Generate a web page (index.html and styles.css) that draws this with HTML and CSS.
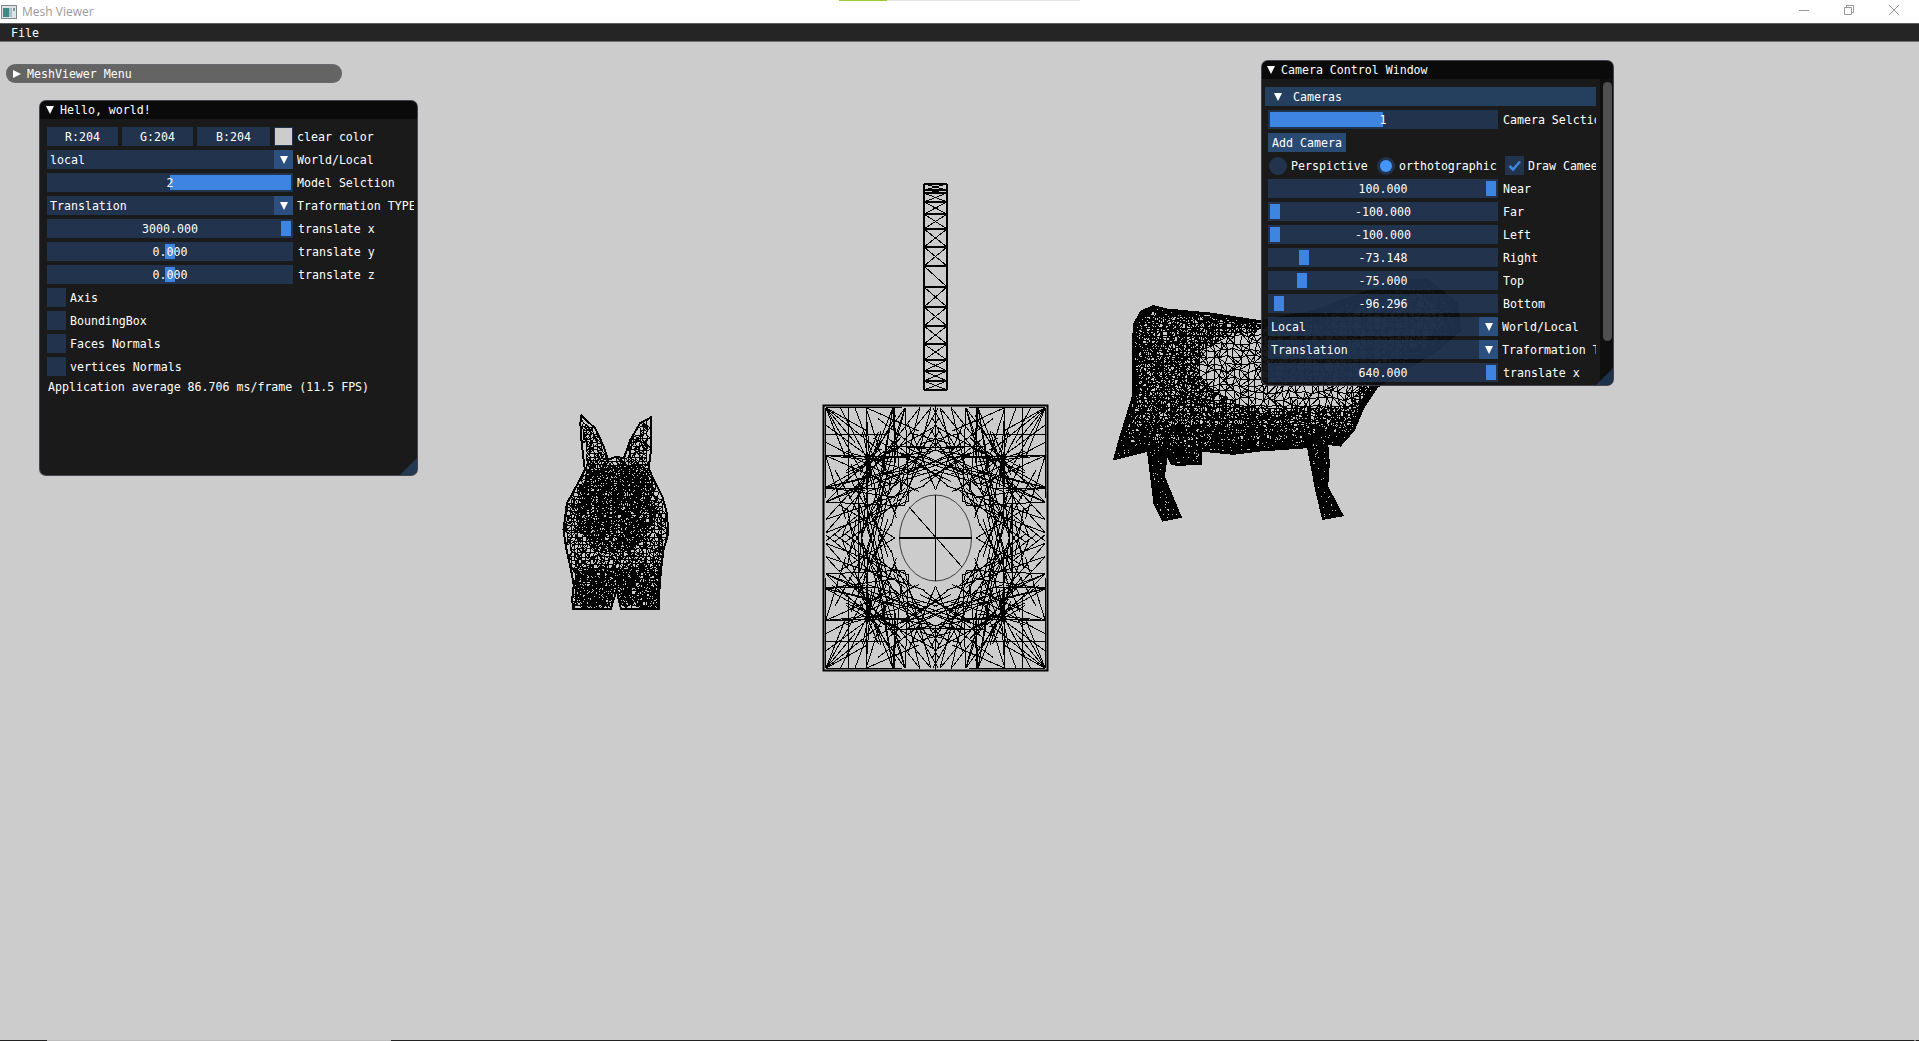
FILE: index.html
```html
<!DOCTYPE html>
<html lang="en">
<head>
<meta charset="utf-8">
<title>Mesh Viewer</title>
<link rel="stylesheet" href="styles.css">
</head>
<body>
<div class="app">
  <header class="titlebar">
    <svg class="app-icon" viewBox="0 0 16 14" width="16" height="14"><rect x="0.5" y="0.5" width="15" height="13" fill="#dfe3e6" stroke="#7d8790"/><rect x="2" y="3" width="6" height="9" fill="#3f8a84"/><rect x="8" y="3" width="3" height="9" fill="#a9c4c9"/><rect x="12" y="3" width="2" height="3" fill="#8a949c"/></svg>
    <span class="app-name">Mesh Viewer</span>
    <div class="loadbar"><span class="load-on"></span><span class="load-off"></span></div>
    <div class="winbtns">
      <svg viewBox="0 0 10 10" width="10" height="10"><path d="M0 5.5H10" stroke="#999"/></svg>
      <svg viewBox="0 0 10 10" width="10" height="10"><path d="M0.5 2.5H7.5V9.5H0.5ZM2.5 2.5V0.5H9.5V7.5H7.5" fill="none" stroke="#999"/></svg>
      <svg viewBox="0 0 10 10" width="10" height="10"><path d="M0 0L10 10M10 0L0 10" stroke="#999"/></svg>
    </div>
  </header>
  <nav class="menubar"><span>File</span></nav>
  <main class="viewport">
    <svg id="meshes" class="meshes" viewBox="0 42 1919 998"></svg>

    <div class="window collapsed-window">
      <div class="title"><i class="tri tri-right"></i><span>MeshViewer Menu</span></div>
    </div>

    <section class="window hello-window">
      <div class="title"><i class="tri"></i><span>Hello, world!</span></div>
      <div class="body hello-body">
        <div class="row">
          <div class="items colors">
            <div class="frame center c-r">R:204</div>
            <div class="frame center c-g">G:204</div>
            <div class="frame center c-b">B:204</div>
            <div class="swatch"></div>
          </div>
          <div class="label">clear color</div>
        </div>
        <div class="row">
          <div class="items combo"><span class="combo-text">local</span><b class="combo-btn"><i class="tri"></i></b></div>
          <div class="label">World/Local</div>
        </div>
        <div class="row">
          <div class="items slider"><i class="grab" style="left:123px;width:121px"></i><span>2</span></div>
          <div class="label">Model Selction</div>
        </div>
        <div class="row">
          <div class="items combo"><span class="combo-text">Translation</span><b class="combo-btn"><i class="tri"></i></b></div>
          <div class="label">Traformation TYPE</div>
        </div>
        <div class="row">
          <div class="items slider"><i class="grab" style="left:234px;width:10px"></i><span>3000.000</span></div>
          <div class="label wide">translate x</div>
        </div>
        <div class="row">
          <div class="items slider"><i class="grab" style="left:118px;width:10px"></i><span>0.000</span></div>
          <div class="label wide">translate y</div>
        </div>
        <div class="row">
          <div class="items slider"><i class="grab" style="left:118px;width:10px"></i><span>0.000</span></div>
          <div class="label wide">translate z</div>
        </div>
        <div class="row"><div class="check"></div><div class="label">Axis</div></div>
        <div class="row"><div class="check"></div><div class="label">BoundingBox</div></div>
        <div class="row"><div class="check"></div><div class="label">Faces Normals</div></div>
        <div class="row"><div class="check"></div><div class="label">vertices Normals</div></div>
        <div class="stat">Application average 86.706 ms/frame (11.5 FPS)</div>
      </div>
      <i class="grip"></i>
    </section>

    <section class="window camera-window">
      <div class="title"><i class="tri"></i><span>Camera Control Window</span></div>
      <div class="camera-main">
        <div class="body camera-body">
          <div class="section-head"><i class="tri"></i><span>Cameras</span></div>
          <div class="row">
            <div class="items cam slider"><i class="grab" style="left:2px;width:113px"></i><span>1</span></div>
            <div class="label wide">Camera Selction</div>
          </div>
          <div class="row"><button class="btn" type="button">Add Camera</button></div>
          <div class="row radios">
            <i class="radio"></i><span class="radio-label r1">Perspictive</span>
            <i class="radio on"></i><span class="radio-label r2">orthotographic</span>
            <div class="check checked"><svg viewBox="0 0 19 19" width="19" height="19"><path d="M4.5 10L8 13.5L15 5.5" fill="none" stroke="#3d85e0" stroke-width="2.6"/></svg></div>
            <div class="label">Draw Cameeras</div>
          </div>
          <div class="row"><div class="items cam slider"><i class="grab" style="left:218px;width:10px"></i><span>100.000</span></div><div class="label wide">Near</div></div>
          <div class="row"><div class="items cam slider"><i class="grab" style="left:2px;width:10px"></i><span>-100.000</span></div><div class="label wide">Far</div></div>
          <div class="row"><div class="items cam slider"><i class="grab" style="left:2px;width:10px"></i><span>-100.000</span></div><div class="label wide">Left</div></div>
          <div class="row"><div class="items cam slider"><i class="grab" style="left:31px;width:10px"></i><span>-73.148</span></div><div class="label wide">Right</div></div>
          <div class="row"><div class="items cam slider"><i class="grab" style="left:29px;width:10px"></i><span>-75.000</span></div><div class="label wide">Top</div></div>
          <div class="row"><div class="items cam slider"><i class="grab" style="left:6px;width:10px"></i><span>-96.296</span></div><div class="label wide">Bottom</div></div>
          <div class="row"><div class="items cam combo"><span class="combo-text">Local</span><b class="combo-btn"><i class="tri"></i></b></div><div class="label">World/Local</div></div>
          <div class="row"><div class="items cam combo"><span class="combo-text">Translation</span><b class="combo-btn"><i class="tri"></i></b></div><div class="label">Traformation TYPE</div></div>
          <div class="row"><div class="items cam slider"><i class="grab" style="left:218px;width:10px"></i><span>640.000</span></div><div class="label wide">translate x</div></div>
        </div>
        <div class="scrollbar"><i class="thumb"></i></div>
      </div>
      <i class="grip"></i>
    </section>
  </main>
  <div class="taskline"><span class="t-a"></span><span class="t-b"></span><span class="t-c"></span><span class="t-d"></span><span class="t-e"></span></div>
</div>
<script src="script.js"></script>
</body>
</html>
```
FILE: styles.css
```css
* { box-sizing: border-box; }
html, body { margin: 0; height: 100%; overflow: hidden; }
body { background: #ccc; color: #fff; font: 11.6px/13px "DejaVu Sans Mono", "Liberation Mono", monospace; }
.app { display: flex; flex-direction: column; height: 100vh; }

.titlebar { height: 23px; flex: none; background: #fff; display: flex; align-items: center; position: relative; padding-left: 1px; }
.app-icon { flex: none; }
.app-name { margin-left: 5px; color: #9a9a9a; font: 12px/16px "Open Sans", "Noto Sans", sans-serif; }
.loadbar { position: absolute; top: 0; left: 839px; width: 241px; height: 1px; display: flex; }
.load-on { width: 48px; background: #9acd32; }
.load-off { flex: 1; background: #e3e3e3; }
.winbtns { margin-left: auto; align-self: flex-start; padding: 5px 20px 0 0; display: flex; gap: 35px; }
.winbtns svg { display: block; }

.menubar { height: 19px; flex: none; background: #252525; border-top: 1px solid #5e5e5e; border-bottom: 1px solid #6f6f6f; padding-left: 11px; display: flex; align-items: center; }

.viewport { flex: 1; position: relative; overflow: hidden; }
.meshes { position: absolute; left: 0; top: 0; width: 1919px; height: 998px; }
.meshes line, .meshes polygon { shape-rendering: crispEdges; }

.window { position: absolute; border: 1px solid rgba(110, 110, 128, .5); border-radius: 7px; background: rgba(15, 15, 15, .94); overflow: hidden; }
.title { height: 18px; background: #0a0a0a; display: flex; align-items: center; padding-left: 6px; }
.title .tri { margin-right: 6px; }
.tri { display: block; flex: none; width: 0; height: 0; border-left: 4.5px solid transparent; border-right: 4.5px solid transparent; border-top: 8px solid #fff; }
.tri-right { border-top: 4.5px solid transparent; border-bottom: 4.5px solid transparent; border-left: 8px solid #fff; border-right: 0; }

/* the bitmap UI font sits a pixel lower than the substitute in a centred box */
.collapsed-window span, .menubar span, .section-head span, .label, .combo-text, .slider span, .frame.center, .radio-label, .btn { padding-top: 2px; }

.collapsed-window { left: 6px; top: 22px; width: 336px; height: 19px; border-radius: 9px; background: rgba(0, 0, 0, .51); border-color: rgba(110, 110, 128, .4); }
.collapsed-window .title { background: transparent; height: 17px; padding-left: 6px; }
.collapsed-window .tri { margin-right: 6px; }

.hello-window { left: 39px; top: 58px; width: 379px; height: 376px; }
.camera-window { left: 1261px; top: 18px; width: 353px; height: 326px; }
.camera-window .title { padding-left: 5px; }

.body { display: flex; flex-direction: column; gap: 4px; }
.hello-body { padding: 8px 3px 0 7px; }
.row { display: flex; height: 19px; flex: none; align-items: center; min-width: 0; }
.items { width: 246px; height: 19px; flex: none; }
.items.cam { width: 230px; }
.frame, .slider, .combo, .check { background: rgba(41, 74, 122, .54); }
.center { display: flex; align-items: center; justify-content: center; }
.colors { display: flex; }
.c-r, .c-g { width: 71px; margin-right: 4px; }
.c-b { width: 73px; margin-right: 4px; }
.swatch { width: 19px; height: 19px; background: #ccc; border: 1px solid #22344e; }
.combo { display: flex; align-items: center; justify-content: space-between; padding-left: 3px; }
.combo-btn { width: 19px; height: 19px; background: rgba(66, 150, 250, .3); display: flex; align-items: center; justify-content: center; }
.slider { position: relative; display: flex; align-items: center; justify-content: center; }
.slider span { position: relative; }
.grab { position: absolute; top: 2px; height: 15px; background: #3d85e0; }
.label { flex: 1; min-width: 0; margin-left: 4px; white-space: nowrap; overflow: hidden; }
.label.wide { margin-left: 5px; }
.check { width: 19px; height: 19px; flex: none; }
.check svg { display: block; }
.stat { padding: 1px 0 0 1px; }
.grip { position: absolute; right: 0; bottom: 0; width: 17px; height: 17px; background: rgba(66, 150, 250, .25); clip-path: polygon(100% 0, 100% 100%, 0 100%); }

.camera-main { display: flex; height: 306px; }
.camera-body { width: 338px; flex: none; padding: 8px 4px 0 3px; overflow: hidden; }
.camera-body > .row { padding-left: 3px; }
.section-head { height: 19px; flex: none; display: flex; align-items: center; background: rgba(66, 150, 250, .31); padding-left: 9px; }
.section-head .tri { margin-right: 11px; }
.btn { height: 19px; width: 78px; padding-left: 0; padding-right: 0; padding-bottom: 0; border: 0; color: #fff; font: inherit; background: rgba(66, 150, 250, .4); }
.radio { width: 18px; height: 18px; flex: none; border-radius: 50%; background: rgba(41, 74, 122, .54); position: relative; margin-left: 1px; }
.radio.on::after { content: ""; position: absolute; left: 3px; top: 3px; width: 12px; height: 12px; border-radius: 50%; background: #4296fa; }
.radio-label { white-space: nowrap; flex: none; margin-left: 4px; }
.r1 { width: 86px; }
.r2 { width: 98px; margin-left: 4px; }
.radio.on { margin-left: 0; }
.radios .check { margin-left: 8px; }
.scrollbar { width: 14px; flex: none; background: rgba(5, 5, 5, .53); padding: 3px 3px 0 3px; }
.thumb { display: block; width: 9px; height: 259px; border-radius: 5px; background: #4f4f4f; }

.taskline { height: 1px; flex: none; display: flex; }
.t-a { width: 47px; background: #222; }
.t-b { width: 344px; background: #bdbdbd; }
.t-c { flex: 1; background: #222; }
.t-d { width: 2px; background: #888; }
.t-e { width: 3px; background: #222; }
```
FILE: script.js
```js
(function () {
  var NS = "http://www.w3.org/2000/svg";
  var svg = document.getElementById("meshes");
  var seed = 12345;
  function rnd() { seed = (seed * 1664525 + 1013904223) >>> 0; return seed / 4294967296; }
  function line(g, a, b, w) {
    var l = document.createElementNS(NS, "line");
    l.setAttribute("x1", a[0]); l.setAttribute("y1", a[1]);
    l.setAttribute("x2", b[0]); l.setAttribute("y2", b[1]);
    l.setAttribute("stroke", "#000");
    l.setAttribute("stroke-width", w || 1);
    g.appendChild(l);
  }
  function inside(p, poly) {
    var c = false;
    for (var i = 0, j = poly.length - 1; i < poly.length; j = i++) {
      var a = poly[i], b = poly[j];
      if ((a[1] > p[1]) !== (b[1] > p[1]) && p[0] < (b[0] - a[0]) * (p[1] - a[1]) / (b[1] - a[1]) + a[0]) c = !c;
    }
    return c;
  }
  function edgeDist(p, poly) {
    var best = 1e9;
    for (var i = 0, j = poly.length - 1; i < poly.length; j = i++) {
      var a = poly[i], b = poly[j], dx = b[0] - a[0], dy = b[1] - a[1];
      var t = Math.max(0, Math.min(1, ((p[0] - a[0]) * dx + (p[1] - a[1]) * dy) / (dx * dx + dy * dy)));
      var ex = a[0] + t * dx - p[0], ey = a[1] + t * dy - p[1];
      best = Math.min(best, Math.sqrt(ex * ex + ey * ey));
    }
    return best;
  }
  /* one jittered triangulated lattice, kept only where keep(point, edge distance) allows */
  function lattice(g, poly, s, jit, keep) {
    var xs = poly.map(function (p) { return p[0]; }), ys = poly.map(function (p) { return p[1]; });
    var x0 = Math.min.apply(0, xs), x1 = Math.max.apply(0, xs), y0 = Math.min.apply(0, ys), y1 = Math.max.apply(0, ys);
    var cols = Math.ceil((x1 - x0) / s) + 1, rows = Math.ceil((y1 - y0) / s) + 1, r, c, grid = [];
    for (r = 0; r < rows; r++) {
      grid.push([]);
      for (c = 0; c < cols; c++) {
        var p = [x0 + c * s + (rnd() - .5) * jit, y0 + r * s + (rnd() - .5) * jit];
        var ok = inside(p, poly) && keep(p, edgeDist(p, poly));
        grid[r].push(ok ? p : null);
      }
    }
    function link(a, b) {
      if (a && b && inside([(a[0] + b[0]) / 2, (a[1] + b[1]) / 2], poly)) line(g, a, b);
    }
    for (r = 0; r < rows; r++) for (c = 0; c < cols; c++) {
      var a = grid[r][c];
      if (!a) continue;
      if (c + 1 < cols) link(a, grid[r][c + 1]);
      if (r + 1 < rows) {
        link(a, grid[r + 1][c]);
        if (rnd() < .5) { if (c + 1 < cols) link(a, grid[r + 1][c + 1]); }
        else if (c > 0) link(a, grid[r + 1][c - 1]);
      }
    }
  }
  function outline(g, poly, w) {
    var o = document.createElementNS(NS, "polygon");
    o.setAttribute("points", poly.join(" "));
    o.setAttribute("fill", "none");
    o.setAttribute("stroke", "#000");
    o.setAttribute("stroke-width", w);
    g.appendChild(o);
  }
  function group() { var g = document.createElementNS(NS, "g"); svg.appendChild(g); return g; }

  /* tower */
  var tower = group();
  var tx0 = 924, tx1 = 947;
  var bars = [184, 190, 193, 202, 214, 229, 247, 266, 287, 307, 326, 344, 360, 371, 381, 390];
  bars.forEach(function (y, i) {
    line(tower, [tx0, y], [tx1, y], i === 0 || i === bars.length - 1 ? 2 : 1.4);
    if (i) {
      var py = bars[i - 1];
      line(tower, [tx0, py], [tx1, y]);
      if (i !== 8) line(tower, [tx1, py], [tx0, y]);
    }
  });
  line(tower, [tx0, 184], [tx0, 390], 2);
  line(tower, [tx1, 184], [tx1, 390], 2);

  /* square plate with a hole: an eightfold mirrored triangulation */
  var plate = group();
  var cx = 935.5, cy = 538, hw = 112, hh = 133;
  function P(u, v) { return [cx + u * hw, cy + v * hh]; }
  function mirrored(a, b) {
    [[1, 1], [-1, 1], [1, -1], [-1, -1]].forEach(function (s) {
      line(plate, P(a[0] * s[0], a[1] * s[1]), P(b[0] * s[0], b[1] * s[1]));
      line(plate, P(a[1] * s[0], a[0] * s[1]), P(b[1] * s[0], b[0] * s[1]));
    });
  }
  function ring(r, deg) {
    var t = deg * Math.PI / 180;
    return [Math.min(.98, Math.cos(t) * r), Math.min(.98, Math.sin(t) * r)];
  }
  var i, fan = [.92, .8, .68, .55, .42, .3];
  for (i = 0; i < 6; i++) mirrored([.98, .98], [.98, fan[i]]);
  mirrored([.98, .98], [.72, .72]);
  mirrored([.98, .98], [.6, .8]);
  mirrored([.98, .98], [.5, .66]);
  var edge = [.04, .14, .27, .38, .5, .62, .72, .85];
  for (i = 0; i < 20; i++) mirrored([.98, edge[Math.floor(rnd() * 8)]], ring(.36 + rnd() * .5, rnd() * 90));
  for (i = 0; i < 20; i++) {
    var a3 = rnd() * 90;
    mirrored(ring(.36 + rnd() * .5, a3), ring(.5 + rnd() * .6, a3 + 15 + rnd() * 50));
  }
  mirrored([.98, .37], [.55, .37]);
  mirrored([.98, .78], [.45, .78]);
  var hole = document.createElementNS(NS, "ellipse");
  hole.setAttribute("cx", cx); hole.setAttribute("cy", cy);
  hole.setAttribute("rx", 36); hole.setAttribute("ry", 43);
  hole.setAttribute("fill", "#ccc"); hole.setAttribute("stroke", "#000"); hole.setAttribute("stroke-width", .7);
  plate.appendChild(hole);
  line(plate, [cx, 495], [cx, 581], 1.4);
  line(plate, [899, cy], [972, cy], 1.4);
  line(plate, [909, 507], [962, 567]);
  line(plate, [cx, 405], [cx, 450]);
  line(plate, [cx, 626], [cx, 670]);
  var frame = document.createElementNS(NS, "rect");
  frame.setAttribute("x", 823.5); frame.setAttribute("y", 405.5);
  frame.setAttribute("width", 224); frame.setAttribute("height", 265);
  frame.setAttribute("fill", "none"); frame.setAttribute("stroke", "#000"); frame.setAttribute("stroke-width", 2);
  plate.appendChild(frame);

  /* bunny */
  function zb(p) { return [540 + p[0] / 2.9, 400 + p[1] / 3]; }
  var bunny = [[120,47],[160,85],[185,140],[197,180],[220,170],[243,175],[262,120],[290,70],[322,52],[322,150],[315,205],[330,240],[355,290],[368,340],[372,400],[358,450],[350,520],[345,590],[345,628],[235,628],[222,570],[205,628],[97,628],[93,600],[98,555],[88,500],[75,440],[68,390],[78,310],[110,250],[130,210],[120,120],[117,70]].map(zb);
  var bg = group();
  lattice(bg, bunny, 3.8, 2.5, function () { return true; });
  lattice(bg, bunny, 4.5, 3, function (p) {
    var ex = (p[0] - 615) / 40, ey = (p[1] - 512) / 42;
    return (ex * ex + ey * ey < 1) || p[1] > 565 || (p[1] < 490 && p[1] > 462);
  });
  outline(bg, bunny, 2);

  /* cow */
  function zc(p) { return [1100 + p[0] / 3, 290 + p[1] / 3]; }
  var cow = [[105,100],[125,65],[160,50],[200,60],[330,72],[480,95],[640,65],[900,-30],[980,-30],[1070,40],[1080,120],[1010,180],[830,290],[790,350],[760,420],[720,465],[680,460],[685,520],[680,590],[725,675],[670,685],[650,600],[625,470],[480,480],[400,490],[300,480],[300,520],[270,520],[240,525],[215,520],[200,490],[190,560],[240,680],[190,690],[165,640],[145,480],[45,505],[60,450],[100,320],[100,150]].map(zc);
  var cg = group();
  lattice(cg, cow, 7, 4, function () { return true; });
  lattice(cg, cow, 4, 3, function (p, d) {
    var ex = (p[0] - 1280) / 80, ey = (p[1] - 368) / 38;
    return !(ex * ex + ey * ey < 1) && (p[0] < 1235 || d < 16 || p[1] > 405);
  });
  lattice(cg, cow, 2.6, 1, function (p, d) {
    return d < 6 || p[1] > 446 || (p[0] < 1130) || (p[1] > 425 && rnd() < .7);
  });
  outline(cg, cow, 3);
})();
```
